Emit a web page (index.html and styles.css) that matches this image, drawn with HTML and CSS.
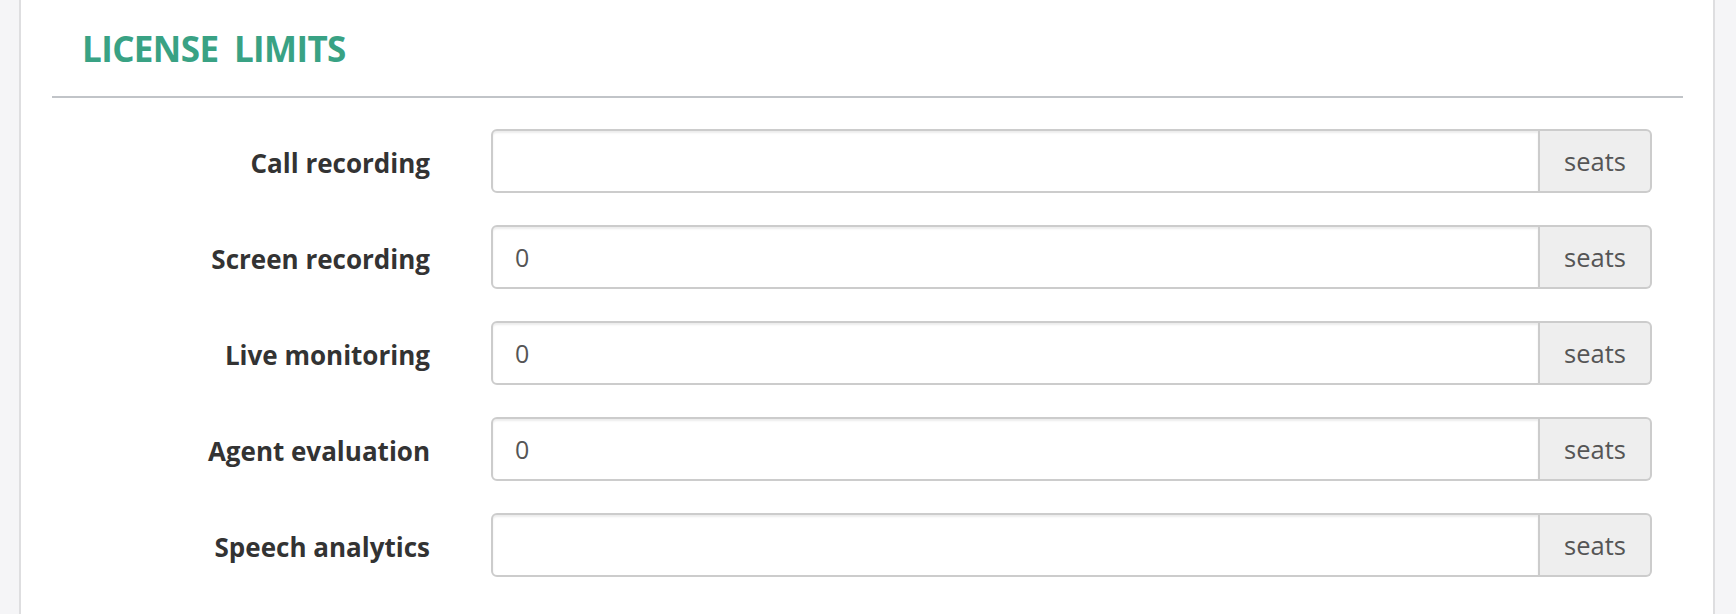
FILE: index.html
```html
<!DOCTYPE html>
<html lang="en">
<head>
    <meta charset="UTF-8">
    <meta name="viewport" content="width=device-width, initial-scale=1.0">
    <title>License limits</title>
    <link rel="stylesheet" href="styles.css">
</head>
<body>

    <div class="panel">
        <div class="panel-header">
            <h2 class="panel-title">LICENSE LIMITS</h2>
        </div>

        <form class="limits">
            <label class="limit-label" for="call-recording">Call recording</label>
            <div class="input-group">
                <input id="call-recording" class="form-control" type="text" value="">
                <span class="input-addon">seats</span>
            </div>

            <label class="limit-label" for="screen-recording">Screen recording</label>
            <div class="input-group">
                <input id="screen-recording" class="form-control" type="text" value="0">
                <span class="input-addon">seats</span>
            </div>

            <label class="limit-label" for="live-monitoring">Live monitoring</label>
            <div class="input-group">
                <input id="live-monitoring" class="form-control" type="text" value="0">
                <span class="input-addon">seats</span>
            </div>

            <label class="limit-label" for="agent-evaluation">Agent evaluation</label>
            <div class="input-group">
                <input id="agent-evaluation" class="form-control" type="text" value="0">
                <span class="input-addon">seats</span>
            </div>

            <label class="limit-label" for="speech-analytics">Speech analytics</label>
            <div class="input-group">
                <input id="speech-analytics" class="form-control" type="text" value="">
                <span class="input-addon">seats</span>
            </div>
        </form>
    </div>

</body>
</html>
```

FILE: styles.css
```css
body {
    font-family: "Open Sans", "Liberation Sans", Arial, sans-serif;
    background-color: #f5f5f7;
    color: #333;
    margin: 0;
}
.panel {
    margin: 0 21px 0 19px;
    min-height: 100vh;
    padding: 0 30px 0 31px;
    box-sizing: border-box;
    background-color: #fff;
    border-left: 2px solid #dedee0;
    border-right: 2px solid #dedee0;
}
.panel-header {
    padding: 31px 0 29px 30px;
    border-bottom: 2px solid #c1c4c8;
}
.panel-title {
    margin: 0;
    font-size: 35px;
    line-height: 36px;
    font-weight: 700;
    letter-spacing: -0.6px;
    word-spacing: 7px;
    color: #39a284;
}
.limits {
    display: grid;
    grid-template-columns: 378px 1fr;
    column-gap: 61px;
    row-gap: 32px;
    align-items: center;
    margin-top: 31px;
    padding-right: 31px;
}
.limit-label {
    padding-top: 4px;
    text-align: right;
    font-size: 26px;
    font-weight: 700;
    color: #333;
}
.input-group {
    display: flex;
    height: 64px;
}
.form-control {
    flex: 1;
    min-width: 0;
    height: 100%;
    box-sizing: border-box;
    padding: 0 22px;
    font-family: inherit;
    font-size: 25px;
    color: #555;
    background-color: #fff;
    border: 2px solid #ccc;
    border-radius: 6px 0 0 6px;
    box-shadow: inset 0 2px 2px rgba(0,0,0,0.075);
    outline: none;
}
.input-addon {
    display: flex;
    align-items: center;
    padding: 0 24px;
    font-size: 25.5px;
    color: #555;
    background-color: #eee;
    border: 2px solid #ccc;
    border-left: 0;
    border-radius: 0 6px 6px 0;
}
```
